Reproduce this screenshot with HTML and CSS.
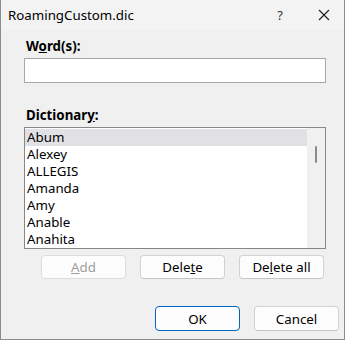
FILE: index.html
```html
<!DOCTYPE html>
<html>
<head>
<meta charset="utf-8">
<link rel="stylesheet" href="styles.css">
</head>
<body>
<div class="window">
  <div class="titlebar">
    <span class="title">RoamingCustom.dic</span>
    <span class="help">?</span>
    <svg class="close" width="12" height="12" viewBox="0 0 12 12"><path d="M1 1 L11 11 M11 1 L1 11" stroke="#1a1a1a" stroke-width="1.1" fill="none"/></svg>
  </div>
  <div class="content">
    <div class="label label-words">W<u>o</u>rd(s):</div>
    <div class="input"></div>
    <div class="label label-dict">Dictionar<u>y</u>:</div>
    <div class="listbox">
      <div class="items">
        <div class="item selected">Abum</div>
        <div class="item">Alexey</div>
        <div class="item">ALLEGIS</div>
        <div class="item">Amanda</div>
        <div class="item">Amy</div>
        <div class="item">Anable</div>
        <div class="item">Anahita</div>
      </div>
      <div class="scrollbar"><div class="thumb"></div></div>
    </div>
    <div class="btnrow">
      <div class="btn disabled"><u>A</u>dd</div>
      <div class="btn">Dele<u>t</u>e</div>
      <div class="btn">De<u>l</u>ete all</div>
    </div>
    <div class="footer">
      <div class="btn ok">OK</div>
      <div class="btn">Cancel</div>
    </div>
  </div>
</div>
</body>
</html>
```
FILE: styles.css
```css
html, body {
  margin: 0;
  padding: 0;
  background: #f0f0f0;
}
.window {
  width: 345px;
  height: 340px;
  box-sizing: border-box;
  border: 1px solid #8c8c8c;
  border-top: none;
  background: #f0f0f0;
  font-family: "Noto Sans", "Open Sans", sans-serif;
  font-size: 13.3px;
  color: #000;
}
.titlebar {
  height: 30px;
  display: flex;
  align-items: center;
  background: #f3f3f3;
}
.title {
  padding-left: 7px;
  flex: 1;
  color: #000;
}
.help {
  font-size: 13px;
  margin-right: 35px;
  color: #333;
}
.close {
  margin-right: 14px;
}
.content {
  padding-left: 23px;
}
.label {
  font-weight: bold;
  line-height: 16px;
  height: 16px;
  padding-left: 2px;
}
.label-words {
  margin-top: 8px;
}
.input {
  margin-top: 4px;
  width: 302px;
  height: 25px;
  box-sizing: border-box;
  border: 1px solid #a8a8a8;
  background: #fff;
}
.label-dict {
  margin-top: 24px;
}
.listbox {
  margin-top: 4px;
  width: 302px;
  height: 122px;
  box-sizing: border-box;
  border: 1px solid #868686;
  background: #fff;
  display: flex;
}
.items {
  width: 282px;
  padding-top: 1px;
}
.item {
  height: 17px;
  line-height: 17px;
  padding-left: 2px;
  white-space: nowrap;
}
.item.selected {
  background: #e0e0e5;
}
.scrollbar {
  width: 18px;
  background: #f0f0f0;
  padding-top: 18px;
  box-sizing: border-box;
}
.thumb {
  width: 2px;
  height: 17px;
  margin-left: 8px;
  background: #8a8a8a;
  border-radius: 1px;
}
.btnrow {
  margin-top: 6px;
  display: flex;
  gap: 14px;
  padding-left: 17px;
}
.btn {
  width: 85px;
  height: 24px;
  box-sizing: border-box;
  border: 1px solid #d2d2d2;
  border-bottom-color: #c4c4c4;
  border-radius: 4px;
  background: #fdfdfd;
  display: flex;
  align-items: center;
  justify-content: center;
  color: #000;
}
.btn.disabled {
  color: #9d9d9d;
  border-color: #dcdcdc;
}
.footer {
  margin-top: 27px;
  display: flex;
  gap: 14px;
  padding-left: 131px;
}
.footer .btn {
  height: 25px;
}
.btn.ok {
  border: 1px solid #0067c0;
}
```
